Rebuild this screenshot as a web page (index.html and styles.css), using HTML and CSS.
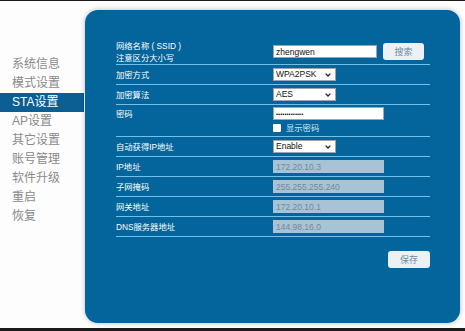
FILE: index.html
```html
<!DOCTYPE html>
<html lang="zh">
<head>
<meta charset="utf-8">
<link rel="stylesheet" href="styles.css">
</head>
<body>
<div class="page">
  <nav class="menu">
    <div class="item">系统信息</div>
    <div class="item">模式设置</div>
    <div class="item active">STA设置</div>
    <div class="item">AP设置</div>
    <div class="item">其它设置</div>
    <div class="item">账号管理</div>
    <div class="item">软件升级</div>
    <div class="item">重启</div>
    <div class="item">恢复</div>
  </nav>
  <div class="panel">
    <div class="form">
      <div class="row row-ssid">
        <div class="label two">网络名称 ( SSID )<br>注意区分大小写</div>
        <div class="value inline">
          <input class="text wide" type="text" value="zhengwen">
          <button class="btn search">搜索</button>
        </div>
      </div>
      <div class="row">
        <div class="label">加密方式</div>
        <div class="value"><span class="selwrap"><select class="sel"><option>WPA2PSK</option></select><svg class="chev" width="6" height="4" viewBox="0 0 6 4"><path d="M0.6 0.6 L3 3 L5.4 0.6" fill="none" stroke="#222" stroke-width="1.3"/></svg></span></div>
      </div>
      <div class="row">
        <div class="label">加密算法</div>
        <div class="value"><span class="selwrap"><select class="sel"><option>AES</option></select><svg class="chev" width="6" height="4" viewBox="0 0 6 4"><path d="M0.6 0.6 L3 3 L5.4 0.6" fill="none" stroke="#222" stroke-width="1.3"/></svg></span></div>
      </div>
      <div class="row row-pwd">
        <div class="label top">密码</div>
        <div class="value stack">
          <input class="text pwd" type="password" value="abcdefghijklm">
          <label class="show"><input type="checkbox" class="chk"><span>显示密码</span></label>
        </div>
      </div>
      <div class="row">
        <div class="label">自动获得IP地址</div>
        <div class="value"><span class="selwrap"><select class="sel"><option>Enable</option></select><svg class="chev" width="6" height="4" viewBox="0 0 6 4"><path d="M0.6 0.6 L3 3 L5.4 0.6" fill="none" stroke="#222" stroke-width="1.3"/></svg></span></div>
      </div>
      <div class="row">
        <div class="label">IP地址</div>
        <div class="value"><input class="text dis" type="text" value="172.20.10.3" disabled></div>
      </div>
      <div class="row">
        <div class="label">子网掩码</div>
        <div class="value"><input class="text dis" type="text" value="255.255.255.240" disabled></div>
      </div>
      <div class="row">
        <div class="label">网关地址</div>
        <div class="value"><input class="text dis" type="text" value="172.20.10.1" disabled></div>
      </div>
      <div class="row">
        <div class="label">DNS服务器地址</div>
        <div class="value"><input class="text dis" type="text" value="144.98.16.0" disabled></div>
      </div>
    </div>
    <div class="actions"><button class="btn save">保存</button></div>
  </div>
</div>
</body>
</html>
```
FILE: styles.css
```css
* { box-sizing: border-box; }
html, body { margin: 0; padding: 0; background: #ffffff; }
body { font-family: "Liberation Sans", "Noto Sans CJK SC", sans-serif; }
.page {
  width: 465px;
  height: 331px;
  border-top: 1px solid #1b1b1b;
  border-bottom: 3px solid #1b1b1b;
  display: flex;
  align-items: flex-start;
  background: #fdfdfd;
}
.menu {
  width: 84px;
  padding-top: 54px;
  flex: none;
}
.item {
  height: 19px;
  line-height: 19px;
  padding-left: 12px;
  font-size: 12px;
  color: #8a8a8a;
  white-space: nowrap;
}
.item.active {
  background: #0b5f92;
  color: #ffffff;
}
.panel {
  flex: none;
  margin-left: 1px;
  margin-top: 9px;
  width: 375px;
  height: 313px;
  background: #03659b;
  border-radius: 13px;
  box-shadow: 0 0 5px rgba(0, 0, 0, 0.28);
  padding: 31px 30px 0 31px;
}
.form { width: 314px; }
.row {
  display: grid;
  grid-template-columns: 157px 1fr;
  height: 20px;
  border-bottom: 1px solid #6fc1ec;
  align-items: center;
}
.row-ssid { height: 24px; }
.row-pwd { height: 32px; align-items: start; }
.label {
  font-size: 8.3px;
  line-height: 10px;
  color: #ffffff;
  white-space: nowrap;
}
.label.two { line-height: 12px; margin-top: -1px; }
.label.top { padding-top: 4px; }
.value { display: flex; align-items: center; }
.value.inline { gap: 6px; margin-top: -2px; }
.value.stack { flex-direction: column; align-items: flex-start; padding-top: 2px; }
.text {
  height: 13px;
  border: 1px solid #9aa7b2;
  background: #ffffff;
  font-family: "Liberation Sans", sans-serif;
  font-size: 8.5px;
  color: #111;
  padding: 0 2px;
  margin: 0;
  outline: none;
}
.wide { width: 104px; }
.pwd { width: 111px; font-size: 6px; letter-spacing: 0; }
.dis {
  width: 111px;
  background: #a7c3d6;
  border-color: #a7c3d6;
  color: #77889a;
}
.selwrap {
  position: relative;
  display: block;
  width: 63px;
  height: 13px;
}
.sel {
  appearance: none;
  -webkit-appearance: none;
  display: block;
  width: 63px;
  height: 13px;
  font-family: "Liberation Sans", sans-serif;
  font-size: 8.5px;
  line-height: 11px;
  padding: 0 0 0 2px;
  margin: 0;
  border: 1px solid #9aa7b2;
  background: #ffffff;
  color: #111;
  border-radius: 0;
}
.chev {
  position: absolute;
  right: 5px;
  top: 5px;
}
.show {
  display: flex;
  align-items: center;
  gap: 5px;
  margin-top: 3px;
  font-size: 8.3px;
  line-height: 10px;
  color: #cfe7f7;
}
.chk {
  width: 8px;
  height: 8px;
  margin: 0;
  appearance: none;
  background: #ffffff;
  border: none;
  border-radius: 1px;
}
.btn {
  height: 17px;
  border: none;
  border-radius: 3px;
  background: #edf1f4;
  color: #6d8aa2;
  font-family: "Liberation Sans", "Noto Sans CJK SC", sans-serif;
  font-size: 9px;
  padding: 0;
  margin: 0;
}
.search { width: 41px; }
.actions {
  width: 314px;
  display: flex;
  justify-content: flex-end;
  margin-top: 14px;
}
.save { width: 42px; }
```
